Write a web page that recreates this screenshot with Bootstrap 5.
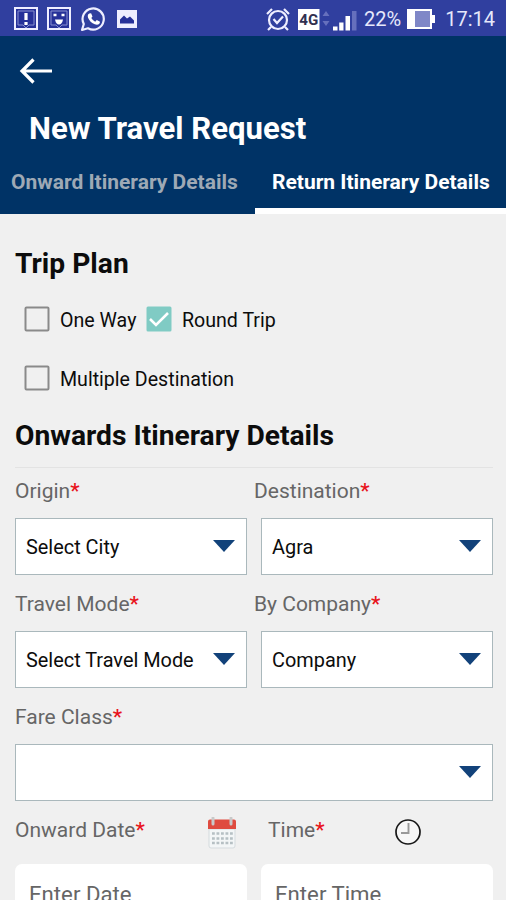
<!DOCTYPE html>
<html lang="en">
<head>
<meta charset="utf-8">
<meta name="viewport" content="width=device-width, initial-scale=1">
<title>New Travel Request</title>
<link href="https://cdn.jsdelivr.net/npm/bootstrap@5.3.0/dist/css/bootstrap.min.css" rel="stylesheet">
<style>
  body { font-family: Roboto, "Liberation Sans", sans-serif; background: #f0f0f0; color: #0c0c0c; height: 900px; overflow: hidden; }
  svg { display: block; flex: none; }
  .status { height: 36px; background: #303f9f; color: #e6e8fb; padding: 1px 11px 0 14px; font-size: 20px; line-height: 36px; }
  .status-left { gap: 9px; }
  .radio { margin-right: 7px; }
  .batt { margin-left: 6px; }
  .clock { padding-left: 10px; }
  .app-head { height: 178px; background: #003366; color: #fff; }
  .back { height: 71px; padding: 20px 0 0 19px; }
  .page-title { font-size: 31.1px; font-weight: 700; line-height: 44px; padding-left: 29px; margin: 0; }
  .tabs { height: 63px; }
  .tab { font-size: 21px; font-weight: 700; line-height: 24px; padding: 19px 0 0; height: 63px; white-space: nowrap; border-radius: 0; color: #9ea9b5; border: 0; background: none; }
  .tab-on { width: 255px; padding-left: 11px; }
  .tab-re { width: 251px; padding-left: 17px; color: #fff; border-bottom: 6px solid #fff; }
  .content { width: 478px; margin-left: 15px; }
  .section-title { font-size: 28.2px; font-weight: 700; line-height: 32px; margin: 0; }
  .trip { margin-top: 34px; }
  .opts { padding: 28px 0 0 9px; }
  .opts.second { padding-top: 33px; }
  .opt { font-size: 19.6px; line-height: 26px; white-space: nowrap; }
  .opt-first { width: 122px; }
  .tick { width: 26px; height: 26px; margin: -2px 10px 2px 0; }
  .onwards { margin-top: 27px; padding-bottom: 15px; border-bottom: 1px solid #e3e3e3; }
  .form-grid { display: grid; grid-template-columns: 232px 232px; column-gap: 14px; }
  .lbl { font-size: 21px; line-height: 26px; color: #666; margin: 0; height: 50px; padding-top: 10px; white-space: nowrap; }
  .lbl.low { height: 56px; padding-top: 16px; }
  .lbl.out { margin-left: -7px; }
  .req { color: #e8141c; font-weight: 500; }
  .pick { height: 57px; background: #fff; border: 1px solid #aab8bc; border-radius: 0; color: #0c0c0c; font-size: 19.9px; padding: 3px 11px 0 10px; }
  .pick svg { margin-bottom: 4px; }
  .wide { grid-column: 1 / 3; }
  .pair { height: 63px; padding-top: 16px; }
  .pair .lbl { height: auto; padding: 0; }
  .pair-date { padding-right: 9px; }
  .pair-time { padding-left: 7px; padding-right: 71px; }
  .entry { height: 60px; border: 0; border-radius: 7px; padding: 0 14px; font-size: 22.2px; color: #666; background: #fff; }
  .entry::placeholder { color: #666; opacity: 1; }
</style>
</head>
<body>
<div class="status d-flex align-items-center justify-content-between">
  <div class="status-left d-flex align-items-center">
    <svg width="24" height="24" viewBox="0 0 24 24"><path d="M1 1h22v21H1z" fill="#263199" stroke="#eef" stroke-width="2"/><path d="M4 4h16v14h-5l-3 3-3-3H4z" fill="none" stroke="#8890d0"/><path d="M12 6v7M12 15v3" stroke="#fff" stroke-width="3.200"/></svg>
    <svg width="24" height="24" viewBox="0 0 24 24"><path d="M1 1h22v21H1z" fill="#263199" stroke="#eef" stroke-width="2"/><path d="M4 4h16v14h-5l-3 3-3-3H4z" fill="none" stroke="#8890d0"/><path d="M6.500 8h3M14.500 8h3" stroke="#fff" stroke-width="2.500"/><path d="M8 12.500h8q-1 5-4 5t-4-5z" fill="#fff"/></svg>
    <svg width="26" height="26" viewBox="0 0 26 26"><path d="M2 24l1.800-6A10.600 10.600 0 1 1 8 22.300z" fill="none" stroke="#eef" stroke-width="2.200" stroke-linejoin="round"/><path d="M9.200 7.500l1.900-.3 1.400 3.400-1.200 1.500q1.400 2.500 3.900 3.600l1.600-1.600 3.200 1.700c0 5-8 3.200-11-2.200-1.600-2.800-1.800-4.900.2-6.100z" fill="#fff"/></svg>
    <svg width="24" height="24" viewBox="0 0 24 24"><path d="M2 3h20v18H2z" fill="#eef"/><path d="M5 16.500v-4l4-4 3 3 3-2 4 4v3z" fill="#263199"/></svg>
  </div>
  <div class="d-flex align-items-center">
    <svg class="radio" width="92" height="26" viewBox="0 0 92 26"><g fill="none" stroke="#eef" stroke-width="2.200"><circle cx="13" cy="14" r="9"/><path d="M2 8l5-5M24 8l-5-5M6 21l-3 3M20 21l3 3"/><path d="M8.500 13l3.500 4 6-6.500"/></g><path d="M33 3h21.500v21H33z" fill="#fff"/><text x="43.800" y="19" text-anchor="middle" font-size="15" font-weight="700" fill="#303050" textLength="19" lengthAdjust="spacingAndGlyphs">4G</text><path d="M57.500 10l3.500-5 3.500 5zM57.500 15l3.500 5 3.500-5z" fill="#6670bd"/><path d="M68 20.500h4.500v4H68zM74.200 16.500h4.300v8h-4.300zM80.500 10h4.500v14.500h-4.500z" fill="#fff"/><path d="M87 5h4.500v19.500H87z" fill="#6670bd"/></svg>
    <span class="pct">22%</span>
    <svg class="batt" width="28" height="20" viewBox="0 0 28 20"><path d="M1 1h23v18H1z" fill="#7f87c7" stroke="#fff" stroke-width="2"/><path d="M1 1h7v18H1zM25 6h3v8h-3z" fill="#fff"/></svg>
    <span class="clock">17:14</span>
  </div>
</div>
<header class="app-head">
  <div class="back"><svg width="34" height="30" viewBox="0 0 34 30"><path d="M33 15H3M14.500 3.500L3 15l11.500 11.500" fill="none" stroke="#fff" stroke-width="3.200"/></svg></div>
  <h1 class="page-title">New Travel Request</h1>
  <nav class="tabs d-flex">
    <button class="tab tab-on d-flex align-items-start">Onward Itinerary Details</button>
    <button class="tab tab-re d-flex align-items-start">Return Itinerary Details</button>
  </nav>
</header>
<main class="content">
  <h2 class="section-title trip">Trip Plan</h2>
  <div class="opts d-flex">
    <div class="opt opt-first d-flex"><svg class="tick" viewBox="0 0 26 26"><rect x="1.500" y="1.500" width="23" height="23" rx="1" fill="none" stroke="#8a8a8a" stroke-width="2"/></svg><span>One Way</span></div>
    <div class="opt d-flex"><svg class="tick" viewBox="0 0 26 26"><rect x=".5" y=".5" width="25" height="25" rx="1.500" fill="#80cbc4"/><path d="M4 13l6 6L22 7" fill="none" stroke="#fff" stroke-width="2.600"/></svg><span>Round Trip</span></div>
  </div>
  <div class="opts second d-flex">
    <div class="opt d-flex"><svg class="tick" viewBox="0 0 26 26"><rect x="1.500" y="1.500" width="23" height="23" rx="1" fill="none" stroke="#8a8a8a" stroke-width="2"/></svg><span>Multiple Destination</span></div>
  </div>
  <h2 class="section-title onwards">Onwards Itinerary Details</h2>
  <div class="form-grid">
    <label class="lbl">Origin<span class="req">*</span></label>
    <label class="lbl out">Destination<span class="req">*</span></label>
    <button class="pick d-flex align-items-center justify-content-between">Select City<svg width="22" height="12" viewBox="0 0 22 12"><path d="M0 0h22L11 12z" fill="#12427a"/></svg></button>
    <button class="pick d-flex align-items-center justify-content-between">Agra<svg width="22" height="12" viewBox="0 0 22 12"><path d="M0 0h22L11 12z" fill="#12427a"/></svg></button>
    <label class="lbl low">Travel Mode<span class="req">*</span></label>
    <label class="lbl low out">By Company<span class="req">*</span></label>
    <button class="pick d-flex align-items-center justify-content-between">Select Travel Mode<svg width="22" height="12" viewBox="0 0 22 12"><path d="M0 0h22L11 12z" fill="#12427a"/></svg></button>
    <button class="pick d-flex align-items-center justify-content-between">Company<svg width="22" height="12" viewBox="0 0 22 12"><path d="M0 0h22L11 12z" fill="#12427a"/></svg></button>
    <label class="lbl low wide">Fare Class<span class="req">*</span></label>
    <button class="pick wide d-flex align-items-center justify-content-end" aria-label="Fare Class"><svg width="22" height="12" viewBox="0 0 22 12"><path d="M0 0h22L11 12z" fill="#12427a"/></svg></button>
    <div class="pair pair-date d-flex justify-content-between">
      <label class="lbl">Onward Date<span class="req">*</span></label>
      <svg width="32" height="32" viewBox="0 0 32 32"><path d="M3 12h26v17a2 2 0 0 1-2 2H5a2 2 0 0 1-2-2z" fill="#f3f6f7" stroke="#d5dbde"/><path d="M2 4.500a2 2 0 0 1 2-2h24a2 2 0 0 1 2 2V12H2z" fill="#df4b3f"/><path d="M7 1v6M25 1v6" stroke="#c9c9c9" stroke-width="3" stroke-linecap="round"/><path d="M6 16.500h21M6 21.500h21M6 26h21" stroke="#b6c0c4" stroke-width="2.600" stroke-dasharray="2.800 1.700"/></svg>
    </div>
    <div class="pair pair-time d-flex justify-content-between">
      <label class="lbl">Time<span class="req">*</span></label>
      <svg width="28" height="28" viewBox="0 0 28 28"><circle cx="14" cy="15" r="12" fill="#f7f7f7" stroke="#181818" stroke-width="1.700"/><path d="M14.500 6v10H7" fill="none" stroke="#999" stroke-width="1.900"/></svg>
    </div>
    <input class="entry" placeholder="Enter Date" aria-label="Enter Date">
    <input class="entry" placeholder="Enter Time" aria-label="Enter Time">
  </div>
</main>
<script src="https://cdn.jsdelivr.net/npm/bootstrap@5.3.0/dist/js/bootstrap.bundle.min.js"></script>
</body>
</html>
